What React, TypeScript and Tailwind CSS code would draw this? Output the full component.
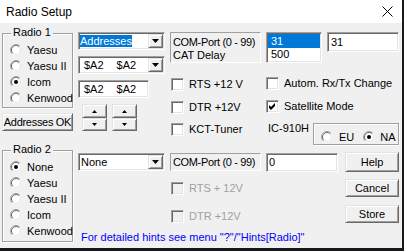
import React from 'react';

const sunken =
  'border border-t-[#a0a0a0] border-l-[#a0a0a0] border-b-white border-r-white shadow-[inset_1px_1px_0_#696969,inset_-1px_-1px_0_#e3e3e3]';
const raised =
  'border border-t-[#e3e3e3] border-l-[#e3e3e3] border-b-[#696969] border-r-[#696969] shadow-[inset_1px_1px_0_#ffffff,inset_-1px_-1px_0_#a0a0a0] bg-[#f0f0f0]';
const etched = 'border border-[#a0a0a0] shadow-[1px_1px_0_#ffffff,inset_1px_1px_0_#ffffff]';
const staticEdge = 'border border-t-[#a0a0a0] border-l-[#a0a0a0] border-b-white border-r-white';

function Radio({ checked = false }: { checked?: boolean }) {
  return (
    <svg width="12" height="12" viewBox="0 0 12 12" className="shrink-0">
      <circle cx="6" cy="6" r="5.5" fill="#ffffff" />
      <path d="M9.9 2.1 A5.5 5.5 0 0 0 2.1 9.9" stroke="#a0a0a0" fill="none" />
      <path d="M9.2 2.8 A4.5 4.5 0 0 0 2.8 9.2" stroke="#696969" fill="none" />
      <path d="M9.9 2.1 A5.5 5.5 0 0 1 2.1 9.9" stroke="#f4f4f4" fill="none" />
      <path d="M9.2 2.8 A4.5 4.5 0 0 1 2.8 9.2" stroke="#e3e3e3" fill="none" />
      {checked && <circle cx="6" cy="6" r="2" fill="#000000" />}
    </svg>
  );
}

function CheckBox({ checked = false, disabled = false }: { checked?: boolean; disabled?: boolean }) {
  return (
    <span
      className={`flex h-[13px] w-[13px] shrink-0 items-center justify-center ${sunken} ${
        disabled ? 'bg-[#f0f0f0]' : 'bg-white'
      }`}
    >
      {checked && (
        <svg width="11" height="11" viewBox="0 0 11 11">
          <polygon points="2,4 4,6 8,2 8,5 4,9 2,7" fill="#000000" />
        </svg>
      )}
    </span>
  );
}

function Check({ label, checked, disabled }: { label: string; checked?: boolean; disabled?: boolean }) {
  return (
    <div className="flex items-center">
      <CheckBox checked={checked} disabled={disabled} />
      <span className={`ml-[5px] leading-[13px] ${disabled ? 'text-[#a0a0a0]' : ''}`}>{label}</span>
    </div>
  );
}

function DownArrow() {
  return (
    <svg width="7" height="4" viewBox="0 0 7 4">
      <polygon points="0,0 7,0 3.5,4" fill="#000000" />
    </svg>
  );
}

function Combo({ children, className = '' }: { children: React.ReactNode; className?: string }) {
  return (
    <div className={`flex h-[18px] w-[87px] bg-white ${sunken} ${className}`}>
      <div className="flex flex-1 items-center overflow-hidden">{children}</div>
      <div className={`my-[1px] mr-[1px] flex w-[15px] items-center justify-center ${raised}`}>
        <DownArrow />
      </div>
    </div>
  );
}

function Spin() {
  return (
    <div className="flex w-[25px] flex-col">
      <div className={`flex h-[14px] items-center justify-center ${raised}`}>
        <svg width="5" height="3" viewBox="0 0 5 3">
          <polygon points="0,3 5,3 2.5,0" fill="#000000" />
        </svg>
      </div>
      <div className={`flex h-[13px] items-center justify-center ${raised}`}>
        <svg width="5" height="3" viewBox="0 0 5 3">
          <polygon points="0,0 5,0 2.5,3" fill="#000000" />
        </svg>
      </div>
    </div>
  );
}

function Group({ label, options, checked, height }: { label: string; options: string[]; checked: number; height: string }) {
  return (
    <div className={`relative w-[71px] ${height} ${etched}`}>
      <span className="absolute -top-[8px] left-[8px] bg-[#f0f0f0] px-[2px] leading-[13px]">{label}</span>
      <div className="flex flex-col pl-[7px] pt-[8px]">
        {options.map((o, i) => (
          <div key={o} className="flex h-[16px] items-center">
            <Radio checked={i === checked} />
            <span className="ml-[5px] leading-[13px]">{o}</span>
          </div>
        ))}
      </div>
    </div>
  );
}

function Button({ label, className = '' }: { label: string; className?: string }) {
  return <div className={`flex items-center justify-center leading-[13px] ${raised} ${className}`}>{label}</div>;
}

export default function App() {
  return (
    <div className="h-[251px] w-[404px] overflow-hidden whitespace-nowrap bg-[#15181c] font-['Liberation_Sans',Arial,sans-serif] text-[11px] text-black">
      <div className="flex h-[248px] w-[402px] flex-col bg-[#f0f0f0]">
        <div className="flex h-[23px] items-center bg-white pl-[6px] pr-[9px]">
          <span className="text-[12px] leading-[14px]">Radio Setup</span>
          <svg className="ml-auto" width="11" height="11" viewBox="0 0 11 11">
            <path d="M0.5 0.5 L10.5 10.5 M10.5 0.5 L0.5 10.5" stroke="#000000" strokeWidth="1" />
          </svg>
        </div>

        <div className="flex pl-[2px]">
          {/* left column */}
          <div className="mt-[10px] flex w-[71px] flex-col">
            <Group label="Radio 1" options={['Yaesu', 'Yaesu II', 'Icom', 'Kenwood']} checked={2} height="h-[75px]" />
            <Button label="Addresses OK" className="mt-[5px] h-[18px] tracking-[-0.3px]" />
            <div className="mt-[19px]">
              <Group
                label="Radio 2"
                options={['None', 'Yaesu', 'Yaesu II', 'Icom', 'Kenwood']}
                checked={0}
                height="h-[92px]"
              />
            </div>
          </div>

          {/* right area */}
          <div className="ml-[5px] flex flex-col pt-[9px]">
            <div className="flex items-start">
              <div className="flex w-[87px] flex-col">
                <Combo>
                  <span className="ml-[1px] bg-[#0078d7] leading-[12px] text-white">Addresses</span>
                </Combo>
                <Combo className="mt-[6px]">
                  <span className="ml-[5px] leading-[13px]">$A2</span>
                  <span className="ml-[13px] leading-[13px]">$A2</span>
                </Combo>
                <div className={`mt-[6px] flex h-[18px] w-[71px] items-center bg-white ${sunken}`}>
                  <span className="ml-[5px] leading-[13px]">$A2</span>
                  <span className="ml-[13px] leading-[13px]">$A2</span>
                </div>
                <div className="ml-[4px] mt-[6px] flex gap-[5px]">
                  <Spin />
                  <Spin />
                </div>
              </div>

              <div className="ml-[5px] flex w-[91px] flex-col">
                <div className={`h-[31px] pl-[2px] pt-[3px] leading-[13px] ${staticEdge}`}>
                  <div className="tracking-[-0.35px]">COM-Port (0 - 99)</div>
                  <div>CAT Delay</div>
                </div>
                <div className="ml-[1px] mt-[15px]">
                  <Check label="RTS +12 V" />
                </div>
                <div className="ml-[1px] mt-[10px]">
                  <Check label="DTR +12V" />
                </div>
                <div className="ml-[1px] mt-[9px]">
                  <Check label="KCT-Tuner" />
                </div>
              </div>

              <div className="ml-[5px] flex w-[133px] flex-col">
                <div className="flex items-start">
                  <div className={`h-[31px] w-[56px] bg-white ${sunken} px-[1px] pt-[1px]`}>
                    <div className="h-[14px] bg-[#0078d7] pl-[3px] leading-[14px] text-white">31</div>
                    <div className="h-[13px] pl-[3px] leading-[13px]">500</div>
                  </div>
                  <div className={`ml-[5px] flex h-[20px] w-[72px] items-center bg-white pl-[3px] ${sunken}`}>
                    <span className="leading-[13px]">31</span>
                  </div>
                </div>
                <div className="mt-[14px]">
                  <Check label="Autom. Rx/Tx Change" />
                </div>
                <div className="mt-[10px]">
                  <Check label="Satellite Mode" checked />
                </div>
                <div className="mt-[10px] flex items-start">
                  <span className="-mt-[1px] ml-[2px] leading-[13px]">IC-910H</span>
                  <div className={`ml-auto flex h-[22px] w-[86px] items-center pl-[7px] pt-[6px] ${etched}`}>
                    <Radio />
                    <span className="ml-[6px] leading-[13px]">EU</span>
                    <span className="ml-[9px] flex items-center">
                      <Radio checked />
                    </span>
                    <span className="ml-[5px] leading-[13px]">NA</span>
                  </div>
                </div>
              </div>
            </div>

            <div className="mt-[7px] flex items-start">
              <Combo className="mt-[1px]">
                <span className="ml-[2px] leading-[13px]">None</span>
              </Combo>

              <div className="ml-[5px] mt-[1px] flex w-[91px] flex-col">
                <div className={`flex h-[18px] items-center pl-[2px] leading-[13px] tracking-[-0.35px] ${staticEdge}`}>
                  COM-Port (0 - 99)
                </div>
                <div className="ml-[1px] mt-[11px]">
                  <Check label="RTS + 12V" disabled />
                </div>
                <div className="ml-[1px] mt-[15px]">
                  <Check label="DTR +12V" disabled />
                </div>
              </div>

              <div className="ml-[5px] flex items-start">
                <div className={`mt-[1px] flex h-[19px] w-[72px] items-center bg-white pl-[2px] ${sunken}`}>
                  <span className="leading-[13px]">0</span>
                </div>
                <div className="ml-[7px] flex w-[54px] flex-col">
                  <Button label="Help" className="h-[20px]" />
                  <Button label="Cancel" className="mt-[7px] h-[18px]" />
                  <Button label="Store" className="mt-[8px] h-[18px]" />
                </div>
              </div>
            </div>

            <div className="ml-[3px] mt-[8px] leading-[13px] text-[#0000ff]">
              For detailed hints see menu "?"/"Hints[Radio]"
            </div>
          </div>
        </div>
      </div>
    </div>
  );
}
